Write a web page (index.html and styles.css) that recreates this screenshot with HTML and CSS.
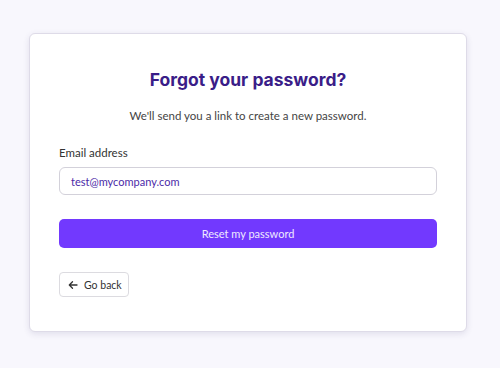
FILE: index.html
```html
<!DOCTYPE html>
<html>
<head>
<meta charset="utf-8">
<link rel="stylesheet" href="styles.css">
</head>
<body>
<div class="page">
  <div class="card">
    <h1 class="title">Forgot your password?</h1>
    <p class="subtitle">We'll send you a link to create a new password.</p>
    <label class="label" for="email">Email address</label>
    <div class="input">test@mycompany.com</div>
    <button class="primary">Reset my password</button>
    <div class="back-row">
      <button class="back">
        <svg class="arrow" width="10" height="10" viewBox="0 0 10 10"><path d="M9 5H1.5M4.5 1.8L1.3 5l3.2 3.2" fill="none" stroke="#333" stroke-width="1.3" stroke-linecap="round" stroke-linejoin="round"/></svg>
        <span>Go back</span>
      </button>
    </div>
  </div>
</div>
</body>
</html>
```
FILE: styles.css
```css
html, body {
  margin: 0;
  padding: 0;
  background: #f8f7fd;
  font-family: Lato, "Noto Sans", sans-serif;
}
.page {
  width: 500px;
  height: 368px;
  padding: 33px 0 0 29px;
  box-sizing: border-box;
}
.card {
  width: 438px;
  height: 299px;
  box-sizing: border-box;
  background: #fff;
  border: 1px solid #dedbe8;
  border-radius: 6px;
  box-shadow: 0 2px 6px rgba(60, 50, 110, 0.12);
  padding: 35px 29px 0 29px;
  display: flex;
  flex-direction: column;
}
.title {
  margin: 0;
  text-align: center;
  font-family: Inter, sans-serif;
  font-size: 17.5px;
  line-height: 22px;
  font-weight: 700;
  color: #3a1d88;
  letter-spacing: 0;
}
.subtitle {
  margin: 17px 0 0;
  text-align: center;
  font-size: 11.5px;
  line-height: 16px;
  color: #444;
}
.label {
  margin-top: 22px;
  font-size: 11.5px;
  line-height: 14px;
  color: #333;
}
.input {
  margin-top: 7px;
  height: 28px;
  box-sizing: border-box;
  border: 1px solid #d3d1da;
  border-radius: 6px;
  padding: 0 11px;
  display: flex;
  align-items: center;
  font-size: 11px;
  color: #4b2aa8;
}
.primary {
  margin-top: 24px;
  height: 29px;
  border: none;
  border-radius: 5px;
  background: #7239fe;
  color: #efe9ff;
  font-family: inherit;
  font-size: 11px;
  padding: 0;
}
.back-row {
  margin-top: 24px;
  display: flex;
}
.back {
  height: 25px;
  width: 70px;
  box-sizing: border-box;
  border: 1px solid #dcdbe0;
  border-radius: 4px;
  background: #fff;
  display: flex;
  align-items: center;
  padding: 0 0 0 8px;
  gap: 6px;
  font-family: inherit;
  font-size: 10.5px;
  color: #333;
}
.arrow {
  display: block;
}
```
